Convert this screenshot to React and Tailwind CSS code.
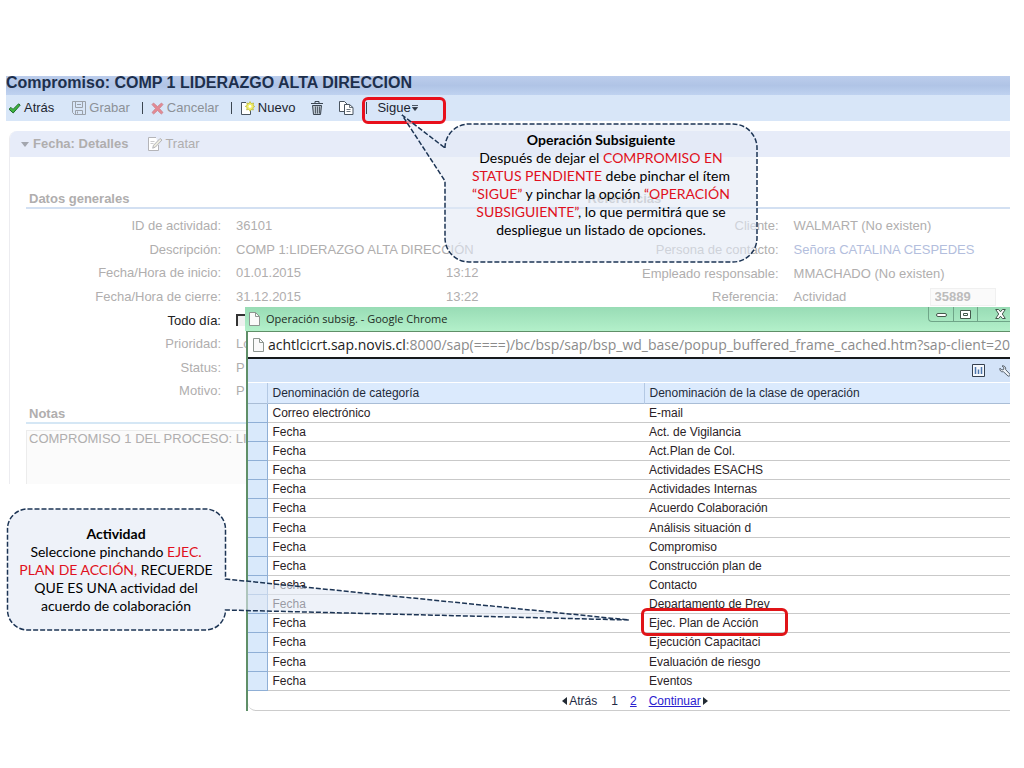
import React, { useState } from "react";

const OPERATIONS = [
  ["Correo electrónico", "E-mail"],
  ["Fecha", "Act. de Vigilancia"],
  ["Fecha", "Act.Plan de Col."],
  ["Fecha", "Actividades ESACHS"],
  ["Fecha", "Actividades Internas"],
  ["Fecha", "Acuerdo Colaboración"],
  ["Fecha", "Análisis situación d"],
  ["Fecha", "Compromiso"],
  ["Fecha", "Construcción plan de"],
  ["Fecha", "Contacto"],
  ["Fecha", "Departamento de Prev"],
  ["Fecha", "Ejec. Plan de Acción"],
  ["Fecha", "Ejecución Capacitaci"],
  ["Fecha", "Evaluación de riesgo"],
  ["Fecha", "Eventos"],
];

// ----------------------------
// Icons
// ----------------------------
function CheckIcon() {
  return (
    <svg width="13" height="11" viewBox="0 0 13 11" aria-hidden="true">
      <path d="M1 6.2 3 4.4l2 2L10.6.8l1.6 1.3L5.2 10Z" fill="#3fb63f" stroke="#1d6b2a" strokeWidth="1" strokeLinejoin="round" />
    </svg>
  );
}

function DiskIcon() {
  return (
    <svg width="14" height="14" viewBox="0 0 14 14" fill="none" stroke="#9aa0a8" aria-hidden="true">
      <path d="M.5.5h13v13h-11l-2-2Z" />
      <path d="M3.5.5v6h7v-6M3.5 13.5v-4h7v4M5.5 10.5v2M5 3.5h4" />
    </svg>
  );
}

function CrossIcon() {
  return (
    <svg width="13" height="13" viewBox="0 0 13 13" aria-hidden="true">
      <path d="M2.5 1 6.5 4.6 10.5 1 12 2.6 8.4 6.5 12 10.5 10.3 12 6.5 8.4 2.7 12 1 10.5 4.6 6.5 1 2.6Z" fill="#e58a94" stroke="#c8818c" strokeWidth=".8" />
    </svg>
  );
}

function NewIcon() {
  return (
    <svg width="15" height="15" viewBox="0 0 15 15" aria-hidden="true">
      <path d="M6 1.5H1.5v12h9V8" fill="#fff" stroke="#4a5560" />
      <path d="m10 .6 1.3 2 2.3-.6-.6 2.3 1.7 1.2-1.9 1.3.6 2.2-2.2-.5L10 10.2 8.8 8.3l-2.2.6.6-2.3-1.9-1.2 2-1.2L6.800 2l2.200.6Z" fill="#f3ef6a" stroke="#b9b52c" strokeWidth=".7" />
      <circle cx="10" cy="5.4" r="1.4" fill="#fff" />
    </svg>
  );
}

function TrashIcon() {
  return (
    <svg width="12" height="14" viewBox="0 0 12 14" fill="none" stroke="#3b4550" aria-hidden="true">
      <path d="M0 2.5h12M4 2.5v-2h4v2" />
      <path d="M1.5 4.5h9l-1 9h-7Z" fill="#b9c3cd" />
      <path d="M4.5 5.5v7M6.5 5.5v7M8.5 5.5v7" strokeWidth=".8" />
    </svg>
  );
}

function CopyIcon() {
  return (
    <svg width="15" height="14" viewBox="0 0 15 14" fill="#fff" stroke="#4a5560" aria-hidden="true">
      <path d="M.5.5h5l3 3v7h-8Z" />
      <path d="M5.5 3.5h5l3.5 3v7H5.5Z" />
      <path d="M10.5 3.5v3H14M7.5 8.5h4M7.5 10.5h4" fill="none" strokeWidth=".8" />
    </svg>
  );
}

function EditIcon() {
  return (
    <svg width="15" height="14" viewBox="0 0 15 14" fill="#fff" stroke="#b4b4b8" aria-hidden="true">
      <path d="M8 .5H.5v13h10V8" />
      <path d="M12 1.5 14 3 7.5 10l-2.8 1.2.8-2.9Z" fill="#ecebdf" />
      <path d="M2.5 4.5h4M2.5 6.5h3" strokeWidth=".7" />
    </svg>
  );
}

function PageIcon() {
  return (
    <svg width="11" height="14" viewBox="0 0 11 14" className="shrink-0" fill="#fafafa" stroke="#8d9590" aria-hidden="true">
      <path d="M.5.5h6l4 4v9H.5Z" />
      <path d="M6.5.5v4h4" fill="none" />
    </svg>
  );
}

function ChartIcon() {
  return (
    <svg width="13" height="13" viewBox="0 0 13 13" fill="none" aria-hidden="true">
      <path d="M.5.5h12v12H.5Z" fill="#f4f8fd" stroke="#35404e" />
      <path d="M3.5 3v7M6.5 5.5V10M9.5 3v7" stroke="#4d76ad" strokeWidth="1.5" />
    </svg>
  );
}

function WrenchIcon() {
  return (
    <svg width="12" height="12" viewBox="0 0 12 12" fill="#eef3f8" stroke="#4a5560" aria-hidden="true">
      <path d="M3 .9 5 2.7 4.6 4.5 2.8 5 1 3.2C.4 5.4 1.9 7.3 4.5 6.8L9 11c1.2.8 2.7-.6 1.9-1.9L6.7 4.7C7.2 2.2 5.3.3 3 .9Z" strokeWidth=".9" />
    </svg>
  );
}

// ----------------------------
// Small pieces
// ----------------------------
function ToolButton({ icon, children, disabled, className = "", ...rest }) {
  return (
    <button disabled={disabled} className={`flex items-center gap-[3px] ${disabled ? "text-[#8c9197]" : "text-[#1c2530]"} ${className}`} {...rest}>
      {icon}
      {children}
    </button>
  );
}

function Bar() {
  return <span className="h-3 w-px bg-[#3b4550]" />;
}

function Field({ label, value, time, valueClass = "" }) {
  return (
    <div className="flex items-center">
      <dt className="w-[195px] shrink-0 text-right">{label}:</dt>
      <dd className={`w-[210px] shrink-0 ml-[15px] whitespace-nowrap ${valueClass}`}>{value}</dd>
      {time && <dd>{time}</dd>}
    </div>
  );
}

function Red({ children }) {
  return <span className="text-[#e01020]">{children}</span>;
}

// ----------------------------
// Popup with the list of follow-up operations
// ----------------------------
function OperationsPopup() {
  return (
    <section className="absolute left-[245px] right-[14px] top-[307px] overflow-hidden">
      <header className="flex h-6 items-center bg-linear-to-b from-[#98dcb5] to-[#b3f0ca] pl-1 text-[#1d2b24]">
        <PageIcon />
        <h2 className="ml-1.5 flex-1 font-['Open_Sans',sans-serif] text-[11px]">Operación subsig. - Google Chrome</h2>
        <div className="flex h-[15px] self-start rounded-bl border-b border-l border-[#6fa588]">
          <button aria-label="Minimizar" className="flex w-[25px] items-end justify-center border-r border-[#6fa588] pb-1">
            <span className="h-1 w-[11px] rounded-xs border border-[#44584c] bg-white" />
          </button>
          <button aria-label="Maximizar" className="flex w-6 items-center justify-center border-r border-[#6fa588]">
            <svg width="11" height="9" viewBox="0 0 11 9" fill="#fff" stroke="#44584c">
              <path d="M.5.5h10v8H.5ZM3.5 3.5h4v2h-4Z" />
            </svg>
          </button>
          <button aria-label="Cerrar" className="flex w-8 items-center justify-end pr-1">
            <svg width="11" height="10" viewBox="0 0 11 10" fill="#fff" stroke="#44584c">
              <path d="M.7.5h2.9l1.9 2.3L7.4.5h2.9L7.3 5l3 4.5H7.4L5.5 7.2 3.6 9.5H.7L3.7 5Z" />
            </svg>
          </button>
        </div>
      </header>

      <div className="ml-px border-l-2 border-t border-[#5f8f68] bg-white">
        <div className="flex h-[27px] items-center gap-1 overflow-hidden border-b-2 border-[#15191c] pl-[5px]">
          <PageIcon />
          <p className="whitespace-nowrap font-['Open_Sans',sans-serif] text-sm text-[#8b8b8b]">
            <span className="text-[#222]">achtlcicrt.sap.novis.cl</span>
            :8000/sap(====)/bc/bsp/sap/bsp_wd_base/popup_buffered_frame_cached.htm?sap-client=20
          </p>
        </div>

        <div className="flex h-6 items-center justify-end gap-[14px] overflow-hidden border-b border-white bg-[#d3e3f8]">
          <button aria-label="Gráfico"><ChartIcon /></button>
          <button aria-label="Configuración" className="-mr-px"><WrenchIcon /></button>
        </div>

        <table className="h-[308px] w-full table-fixed border-collapse text-left text-xs leading-none text-[#2a2226]">
          <colgroup>
            <col className="w-[19px]" />
            <col className="w-[377px]" />
            <col />
          </colgroup>
          <thead>
            <tr className="h-5 border-b border-[#a9bdd6] bg-[#dbeafd] text-[#1f2a3a]">
              <th className="border-r border-[#b4c9e4] p-0" />
              <th className="border-r border-[#b4c9e4] p-0 pl-[5px] font-normal">Denominación de categoría</th>
              <th className="p-0 pl-[5px] font-normal">Denominación de la clase de operación</th>
            </tr>
          </thead>
          <tbody>
            {OPERATIONS.map(([category, name]) => (
              <tr key={name} className="border-b border-[#c9c9c9]">
                <td className="border-b border-r border-[#8fafd6] bg-[#d9e9fb] p-0" />
                <td className="p-0 pl-[5px]">{category}</td>
                <td className="p-0 pl-[5px]">{name}</td>
              </tr>
            ))}
          </tbody>
        </table>

        <nav className="flex h-5 items-center justify-center rounded-bl-lg border-b border-[#ccc] pl-3 text-xs text-[#222a44]">
          <button className="flex items-center gap-0.5">
            <svg width="5" height="8" viewBox="0 0 5 8"><path d="M5 0v8L0 4Z" fill="#222a33" /></svg>
            Atrás
          </button>
          <span className="ml-[14px]">1</span>
          <a href="#2" className="ml-3 text-[#2a20d0] underline">2</a>
          <a href="#siguiente" className="ml-3 text-[#2a20d0] underline">Continuar</a>
          <svg width="5" height="8" viewBox="0 0 5 8" className="ml-0.5"><path d="M0 0v8l5-4Z" fill="#222a33" /></svg>
        </nav>
      </div>
    </section>
  );
}

// ----------------------------
// Speech balloons over the screens
// ----------------------------
function SubsiguienteCallout() {
  return (
    <aside className="absolute left-[400px] top-[112px] h-[152px] w-[360px]">
      <svg viewBox="0 0 360 152" className="absolute inset-0 h-full w-full" aria-hidden="true">
        <path
          d="M45 36A24 24 0 0 1 69 12H333A24 24 0 0 1 357 36V126A24 24 0 0 1 333 150H69A24 24 0 0 1 45 126V69L2 3Z"
          fill="#e3eaf5" fillOpacity=".6" stroke="#1c3454" strokeWidth="1.5" strokeDasharray="5 2"
        />
      </svg>
      <div className="relative ml-[45px] mr-[3px] pt-[19px] text-center font-[Lato,sans-serif] text-sm leading-[18px] text-black">
        <h3 className="font-bold">Operación Subsiguiente</h3>
        <p>
          Después de dejar el <Red>COMPROMISO EN</Red><br />
          <Red>STATUS PENDIENTE</Red> debe pinchar el ítem<br />
          <Red>“SIGUE”</Red> y pinchar la opción <Red>“OPERACIÓN</Red><br />
          <Red>SUBSIGUIENTE”</Red>, lo que permitirá que se<br />
          despliegue un listado de opciones.
        </p>
      </div>
    </aside>
  );
}

function ActividadCallout() {
  return (
    <aside className="absolute left-[6px] top-[508px] h-[124px] w-[626px]">
      <svg viewBox="0 0 626 124" className="absolute inset-0 h-full w-full" aria-hidden="true">
        <path
          d="M21.5 1H199.5A20 20 0 0 1 219.5 21V71L623 112 219.5 102A20 20 0 0 1 199.5 122H21.5A20 20 0 0 1 1.5 102V21A20 20 0 0 1 21.5 1Z"
          fill="#e3eaf5" fillOpacity=".6" stroke="#1c3454" strokeWidth="1.5" strokeDasharray="5 2"
        />
      </svg>
      <div className="relative w-[220px] pt-[17px] text-center font-[Lato,sans-serif] text-sm leading-[18px] text-black">
        <h3 className="font-bold">Actividad</h3>
        <p>
          Seleccione pinchando <Red>EJEC.</Red><br />
          <Red>PLAN DE ACCIÓN,</Red> RECUERDE<br />
          QUE ES UNA actividad del<br />
          acuerdo de colaboración
        </p>
      </div>
    </aside>
  );
}

export default function App() {
  const [allDay, setAllDay] = useState(false);

  return (
    <main className="relative min-h-screen overflow-hidden bg-white pl-[6px] pr-[14px] pt-[76px] font-['Liberation_Sans',Arial,sans-serif] text-[13px]">
      <header>
        <h1 className="h-[19px] whitespace-nowrap bg-linear-to-b from-[#bccdec] via-[#b0c4e6] to-[#bfd2f0] text-base font-bold leading-[13px] text-[#1d2f4c]">
          Compromiso: COMP 1 LIDERAZGO ALTA DIRECCION
        </h1>
        <div className="flex h-[26px] items-center bg-[#d8e6f8] pl-0.5">
          <ToolButton icon={<CheckIcon />}>Atrás</ToolButton>
          <ToolButton icon={<DiskIcon />} disabled className="ml-[18px] mr-3">Grabar</ToolButton>
          <Bar />
          <ToolButton icon={<CrossIcon />} disabled className="ml-2 mr-3">Cancelar</ToolButton>
          <Bar />
          <ToolButton icon={<NewIcon />} className="ml-2 mr-4">Nuevo</ToolButton>
          <ToolButton icon={<TrashIcon />} aria-label="Borrar" className="mr-4" />
          <ToolButton icon={<CopyIcon />} aria-label="Copiar" className="mr-3" />
          <Bar />
          <ToolButton className="ml-2.5">
            Sigue
            <svg width="6" height="6" viewBox="0 0 6 6" className="-ml-0.5"><path d="M0 .5h6M.5 2.5h5L3 5.5Z" fill="#2b3440" stroke="#2b3440" strokeWidth=".8" /></svg>
          </ToolButton>
        </div>
      </header>

      <section className="ml-[3px] mt-2.5 h-[353px] overflow-hidden rounded-tl-lg border-l border-[#ececf0] text-[#b0aeae]">
        <div className="flex h-[26px] items-center bg-[#e7ecf9] pl-[11px]">
          <svg width="8" height="5" viewBox="0 0 8 5"><path d="M0 0h8L4 5Z" fill="#a3a6ae" /></svg>
          <h2 className="ml-1 font-bold">Fecha: Detalles</h2>
          <button className="ml-5 flex items-center gap-0.5">
            <EditIcon />
            Tratar
          </button>
        </div>

        <div className="pl-4 pt-[34px]">
          <div className="grid grid-cols-[17fr_13fr] border-b-2 border-[#d3e0f2] font-bold leading-4">
            <h3 className="pl-[3px]">Datos generales</h3>
            <h3 className="pl-1">Referencias</h3>
          </div>

          <div className="grid grid-cols-[17fr_13fr] pt-[5px]">
            <dl className="grid h-[189px] grid-rows-8">
              <Field label="ID de actividad" value="36101" />
              <Field label="Descripción" value="COMP 1:LIDERAZGO ALTA DIRECCIÓN" />
              <Field label="Fecha/Hora de inicio" value="01.01.2015" time="13:12" />
              <Field label="Fecha/Hora de cierre" value="31.12.2015" time="13:22" />
              <div className="flex items-center text-[#222]">
                <dt className="w-[195px] text-right">
                  <label htmlFor="todo-dia">Todo día:</label>
                </dt>
                <dd className="ml-[15px] flex">
                  <input
                    id="todo-dia"
                    type="checkbox"
                    checked={allDay}
                    onChange={(e) => setAllDay(e.target.checked)}
                    className="size-3 appearance-none border-l-2 border-t-2 border-[#333] bg-[#f0f0f0]"
                  />
                </dd>
              </div>
              <Field label="Prioridad" value="Lo" />
              <Field label="Status" value="P" />
              <Field label="Motivo" value="P" />
            </dl>

            <dl className="grid h-[95px] grid-rows-4">
              <Field label="Cliente" value="WALMART (No existen)" />
              <Field label="Persona de contacto" value={<a href="#contacto">Señora CATALINA CESPEDES</a>} valueClass="text-[#b3bedd]" />
              <Field label="Empleado responsable" value="MMACHADO (No existen)" />
              <Field
                label="Referencia"
                value={
                  <span className="flex items-center justify-between pr-2">
                    Actividad
                    <input aria-label="Número de referencia" readOnly value="35889" className="h-[18px] w-[66px] border border-[#f0f0f0] bg-[#fafafa] pl-1 font-bold text-[#bcbcbc]" />
                  </span>
                }
              />
            </dl>
          </div>

          <h3 className="mt-[3px] border-b-2 border-[#d5e7f5] pl-[3px] font-bold leading-4">
            <label htmlFor="notas">Notas</label>
          </h3>
          <textarea
            id="notas"
            readOnly
            value="COMPROMISO 1 DEL PROCESO: LI"
            className="mt-1.5 block h-20 w-[57%] resize-none border border-[#ececec] bg-[#fbfbfb] px-0.5 leading-4"
          />
        </div>
      </section>

      <OperationsPopup />

      <div className="pointer-events-none absolute left-[362px] top-[97px] h-[27px] w-[84px] rounded-md border-3 border-[#e8101c]" />
      <div className="pointer-events-none absolute left-[641px] top-[608px] h-[28px] w-[147px] rounded-md border-3 border-[#e01418]" />
      <SubsiguienteCallout />
      <ActividadCallout />
    </main>
  );
}
